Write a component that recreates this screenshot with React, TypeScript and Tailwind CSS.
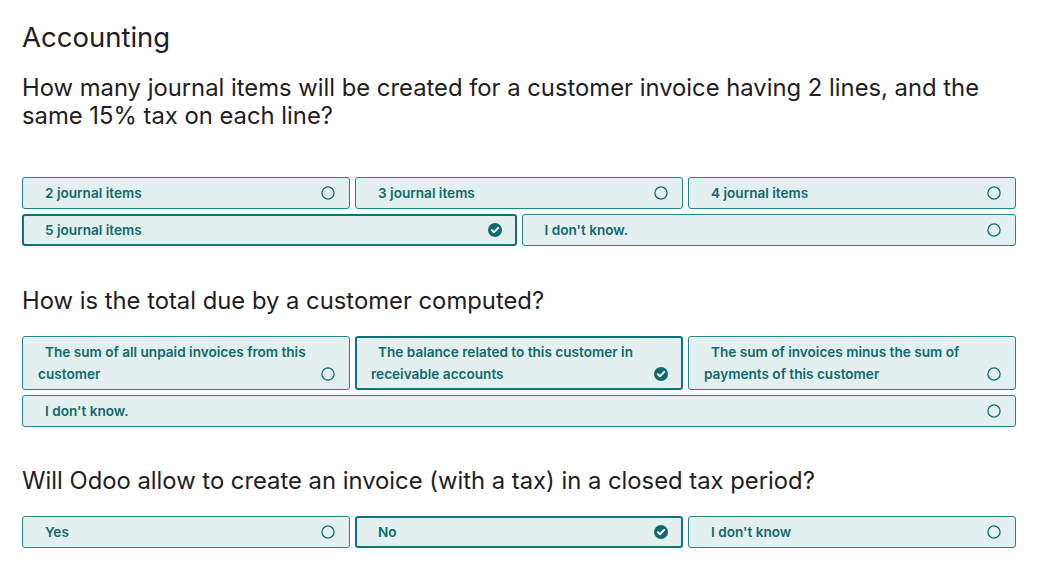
import React from 'react';

type Choice = { label: string; selected?: boolean };

const questions: { title: string; choices: Choice[]; top: string; gap: string }[] = [
  {
    title: 'How many journal items will be created for a customer invoice having 2 lines, and the same 15% tax on each line?',
    top: 'mt-[21px]',
    gap: 'mt-[47px]',
    choices: [
      { label: '2 journal items' },
      { label: '3 journal items' },
      { label: '4 journal items' },
      { label: '5 journal items', selected: true },
      { label: "I don't know." },
    ],
  },
  {
    title: 'How is the total due by a customer computed?',
    top: 'mt-[41px]',
    gap: 'mt-[21px]',
    choices: [
      { label: 'The sum of all unpaid invoices from this customer' },
      { label: 'The balance related to this customer in receivable accounts', selected: true },
      { label: 'The sum of invoices minus the sum of payments of this customer' },
      { label: "I don't know." },
    ],
  },
  {
    title: 'Will Odoo allow to create an invoice (with a tax) in a closed tax period?',
    top: 'mt-[40px]',
    gap: 'mt-[21px]',
    choices: [
      { label: 'Yes' },
      { label: 'No', selected: true },
      { label: "I don't know" },
    ],
  },
];

function RadioIcon({ selected }: { selected?: boolean }) {
  if (selected) {
    return (
      <svg width="14" height="14" viewBox="0 0 14 14">
        <circle cx="7" cy="7" r="7" fill="#0d6a6f" />
        <path d="M3.9 7.2 L6 9.2 L10.2 4.9" stroke="#fff" strokeWidth="2" fill="none" strokeLinecap="round" strokeLinejoin="round" />
      </svg>
    );
  }
  return (
    <svg width="14" height="14" viewBox="0 0 14 14">
      <circle cx="7" cy="7" r="6.1" fill="none" stroke="#0f6e72" strokeWidth="1.3" />
    </svg>
  );
}

function ChoiceBox({ choice }: { choice: Choice }) {
  return (
    <div
      className={
        choice.selected
          ? 'grow basis-[320px] rounded-[3px] border-2 border-[#0f7479] bg-[#e4f0f0] pl-[14px] pr-[13px] py-[3px]'
          : 'grow basis-[320px] rounded-[3px] border border-[#23848a] bg-[#e4f0f0] pl-[15px] pr-[14px] py-[4px]'
      }
    >
      <div className="flex items-end justify-between gap-3">
        <span className="indent-[7px] text-[13.6px] leading-[22px] font-semibold text-[#0d6a6f]">{choice.label}</span>
        <span className="flex h-[22px] shrink-0 items-center">
          <RadioIcon selected={choice.selected} />
        </span>
      </div>
    </div>
  );
}

export default function App() {
  return (
    <div className="min-h-screen bg-white px-[22px] pt-[21px] font-['Inter',sans-serif] text-[#1f2023]">
      <h1 className="text-[27.5px] leading-[32px]">Accounting</h1>

      {questions.map((q) => (
        <div key={q.title} className={q.top}>
          <h2 className="text-[23.8px] leading-[28px]">{q.title}</h2>
          <div className={`${q.gap} flex w-[994px] flex-wrap gap-[5px]`}>
            {q.choices.map((c) => (
              <ChoiceBox key={c.label} choice={c} />
            ))}
          </div>
        </div>
      ))}
    </div>
  );
}
